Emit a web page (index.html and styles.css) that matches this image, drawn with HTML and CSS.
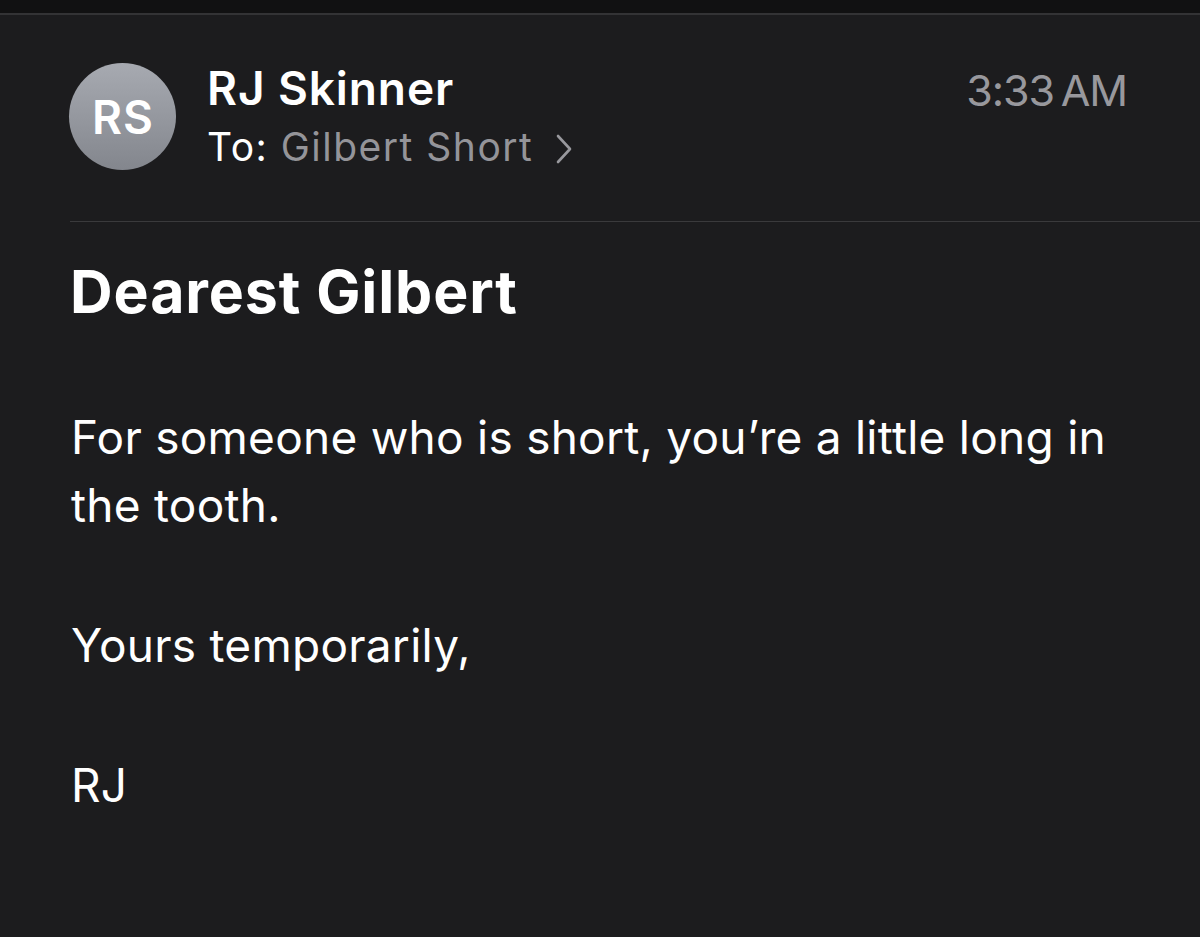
FILE: index.html
```html
<!DOCTYPE html>
<html>
<head>
<meta charset="utf-8">
<link rel="stylesheet" href="styles.css">
</head>
<body>
<div class="topbar"></div>
<main class="mail">
  <header class="header">
    <div class="avatar">RS</div>
    <div class="meta">
      <div class="name">RJ Skinner</div>
      <div class="to">To: <span class="recipient">Gilbert Short</span><svg class="chev" width="16" height="30" viewBox="0 0 16 30"><path d="M2 2 L14 15 L2 28" fill="none" stroke="#98989d" stroke-width="2.6" stroke-linecap="round" stroke-linejoin="round"/></svg></div>
    </div>
    <div class="time">3:33&#8239;AM</div>
  </header>
  <div class="divider"></div>
  <h1 class="subject">Dearest Gilbert</h1>
  <div class="body">
    <p>For someone who is short, you’re a little long in the tooth.</p>
    <p>Yours temporarily,</p>
    <p>RJ</p>
  </div>
</main>
</body>
</html>
```
FILE: styles.css
```css
html, body {
  margin: 0;
  padding: 0;
  background: #1c1c1e;
  font-family: Inter, "Noto Sans", sans-serif;
  color: #ffffff;
}
.topbar {
  height: 13px;
  background: #111112;
  border-bottom: 2px solid #333335;
}
.mail {
  padding-left: 70px;
}
.header {
  display: flex;
  align-items: flex-start;
  padding-top: 48px;
}
.avatar {
  width: 107px;
  height: 107px;
  margin-left: -1px;
  border-radius: 50%;
  background: linear-gradient(180deg, #a7aab1 0%, #83868d 100%);
  color: #fff;
  font-weight: 600;
  font-size: 46px;
  letter-spacing: 1px;
  padding-left: 1px;
  box-sizing: border-box;
  display: flex;
  align-items: center;
  justify-content: center;
  flex: none;
}
.meta {
  margin-left: 31px;
  flex: 1;
}
.name {
  font-size: 46px;
  font-weight: 600;
  line-height: 54px;
  margin-top: -2px;
  letter-spacing: 0.9px;
}
.to {
  font-size: 39px;
  line-height: 56px;
  margin-top: 4px;
  letter-spacing: 1.5px;
  white-space: nowrap;
}
.recipient {
  color: #949499;
}
.chev {
  margin-left: 23px;
  vertical-align: -3px;
}
.time {
  font-size: 43px;
  color: #98989d;
  margin-right: 73px;
  line-height: 54px;
  letter-spacing: -1.1px;
}
.divider {
  border-top: 1px solid #3a3a3c;
  margin-top: 46px;
}
.subject {
  margin: 36px 0 0 0;
  font-size: 59px;
  font-weight: 700;
  line-height: 68px;
  letter-spacing: 0.9px;
}
.body {
  margin-top: 77px;
}
.body p {
  margin: 0 0 72px 1px;
  max-width: 1060px;
  font-size: 46px;
  line-height: 68px;
  letter-spacing: 0.25px;
}
```
